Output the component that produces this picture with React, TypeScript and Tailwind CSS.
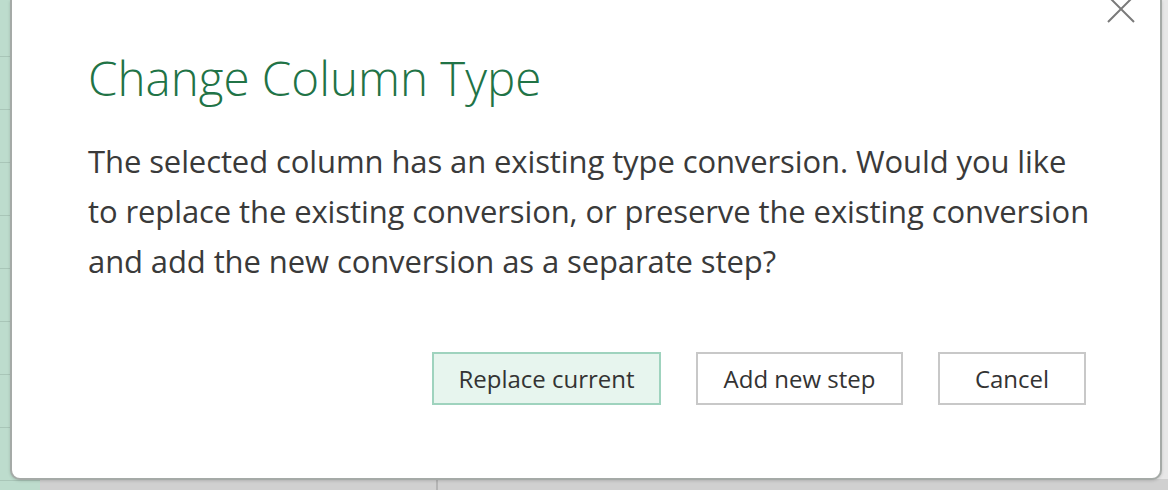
import React from "react";

const gridRows = Array.from({ length: 9 });

function CloseIcon() {
  return (
    <svg width="28" height="28" viewBox="0 0 28 28" className="absolute left-[1095px] top-[-5px]">
      <path d="M1 1 L27 27 M27 1 L1 27" stroke="#7a7a7a" strokeWidth="2" fill="none" />
    </svg>
  );
}

export default function App() {
  return (
    <div className="relative w-[1168px] h-[490px] overflow-hidden flex bg-[#e7e7e7]">
      {/* spreadsheet behind the dialog */}
      <div className="w-[40px] h-full flex flex-col bg-[#bddccd]">
        <div className="h-[4px]" />
        {gridRows.map((_, i) => (
          <div key={i} className="h-[53px] shrink-0 border-b border-[#a9c6b8]" />
        ))}
      </div>
      <div className="flex-1 flex flex-col">
        <div className="flex-1" />
        <div className="h-[11px] bg-[#d0d0d0] flex">
          <div className="w-[398px] border-r-2 border-[#b4b4b4]" />
        </div>
      </div>

      {/* dialog */}
      <div className="absolute left-[10px] top-0 w-[1152px] h-[480px] bg-white rounded-b-[10px] border-x-2 border-b-2 border-[#a5aaa7] shadow-[0_1px_3px_rgba(0,0,0,0.15)] font-['Open_Sans',sans-serif]">
        <CloseIcon />
        <div className="pl-[76px] pr-[74px] pt-[46px] flex flex-col">
          <h1 className="text-[47.5px] leading-[64px] font-light text-[#217346]">
            Change Column Type
          </h1>
          <p className="mt-[26px] text-[31px] leading-[50px] text-[#3a3a3a] tracking-[-0.1px] whitespace-nowrap">
            The selected column has an existing type conversion. Would you like
            <br />
            to replace the existing conversion, or preserve the existing conversion
            <br />
            and add the new conversion as a separate step?
          </p>
          <div className="mt-[66px] flex justify-end gap-[35px] text-[24px] text-[#333333]">
            <button className="w-[229px] h-[53px] border-2 border-[#9fd3be] bg-[#e7f5ee]">
              Replace current
            </button>
            <button className="w-[207px] h-[53px] border-2 border-[#c8c8c8] bg-white">
              Add new step
            </button>
            <button className="w-[148px] h-[53px] border-2 border-[#c8c8c8] bg-white">
              Cancel
            </button>
          </div>
        </div>
      </div>
    </div>
  );
}
